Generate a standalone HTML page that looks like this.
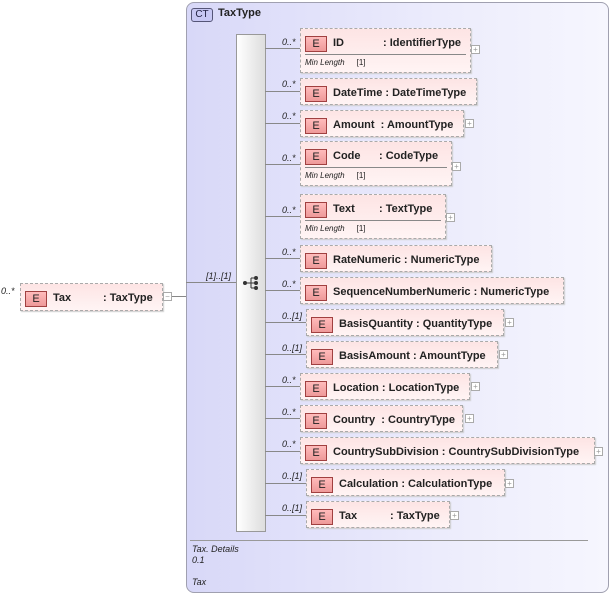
<!DOCTYPE html>
<html><head><meta charset="utf-8"><style>
body{margin:0;width:612px;height:594px;background:#fff;position:relative;overflow:hidden;font-family:"Liberation Sans",sans-serif;}
.a{position:absolute}
.outer{left:186px;top:2px;width:421px;height:589px;border:1px solid #a0a0b0;border-radius:8px;background:linear-gradient(to right,#d8d8f8,#ececfc 60%,#f6f6fe);}
.seq{left:236px;top:34px;width:28px;height:496px;border:1px solid #999;background:linear-gradient(to right,#fff,#ddd);}
.el{position:absolute;border:1px dashed #aaa;background:linear-gradient(to bottom,#fde4e4,#fff4f4);box-shadow:1px 1px 1px #ccc;font-size:11px;font-weight:bold;color:#222;}
.el .row{height:25px;display:flex;align-items:center;white-space:nowrap;padding-top:2px;box-sizing:border-box}
.E{display:inline-block;width:20px;height:14px;border:1px solid #a04040;background:linear-gradient(#fbb,#e99);font-size:11px;font-weight:normal;text-align:center;line-height:14px;margin:0 6px 0 4px;color:#222;position:relative;top:1px}
.fac{border-top:1px solid #888;margin:0 4px;height:17px;font-size:8px;font-style:italic;font-weight:normal;line-height:15px;color:#222}
.fac span{font-style:normal;margin-left:12px}
.ln{position:absolute;height:1px;background:#888}
.lb{position:absolute;font-size:9px;font-style:italic;color:#222}
.pl{position:absolute;width:7px;height:7px;border:1px solid #aaa;background:#fff;font-size:8px;line-height:7px;text-align:center;color:#999}
</style></head><body>
<div class="a outer"></div>
<div class="a" style="left:191px;top:8px;width:20px;height:12px;border:1px solid #557;border-radius:3px;background:#c8c8f4;font-size:10px;line-height:12px;text-align:center;color:#224">CT</div>
<div class="a" style="left:218px;top:7px;font-size:11px;font-weight:bold;color:#222">TaxType</div>
<div class="a seq"></div>
<svg class="a" style="left:242px;top:275px" width="20" height="16"><circle cx="3" cy="8" r="2" fill="#333"/><line x1="3" y1="8" x2="9" y2="8" stroke="#333"/><path d="M9 3V13M9 3H14M9 8H14M9 13H14" stroke="#333" fill="none"/><circle cx="14" cy="3" r="2" fill="#333"/><circle cx="14" cy="8" r="2" fill="#333"/><circle cx="14" cy="13" r="2" fill="#333"/></svg>
<div class="ln" style="left:186px;top:282px;width:50px"></div>
<div class="ln" style="left:171px;top:296px;width:15px"></div>
<div class="lb" style="left:206px;top:271px">[1]..[1]</div>
<div class="lb" style="left:1px;top:286px">0..*</div>
<div class="el" style="left:20px;top:283px;width:141px;height:26px"><div class="row"><span class="E">E</span><span style="width:50px">Tax</span>: TaxType</div></div>
<div class="pl" style="left:163px;top:292px">−</div>
<div class="a" style="left:190px;top:540px;width:398px;height:1px;background:#999"></div>
<div class="lb" style="left:192px;top:544px;line-height:11px">Tax. Details<br>0.1<br><br>Tax</div>

<div class="ln" style="left:265px;top:48px;width:35px"></div><div class="lb" style="left:282px;top:37px">0..*</div>
<div class="el" style="left:300px;top:28px;width:169px;height:43px"><div class="row"><span class="E">E</span><span style="width:50px">ID</span>: IdentifierType</div><div class="fac">Min Length<span>[1]</span></div></div>
<div class="pl" style="left:471px;top:45px">+</div>

<div class="ln" style="left:265px;top:91px;width:35px"></div><div class="lb" style="left:282px;top:79px">0..*</div>
<div class="el" style="left:300px;top:78px;width:175px;height:25px"><div class="row"><span class="E">E</span>DateTime&nbsp;: DateTimeType</div></div>

<div class="ln" style="left:265px;top:123px;width:35px"></div><div class="lb" style="left:282px;top:111px">0..*</div>
<div class="el" style="left:300px;top:110px;width:162px;height:25px"><div class="row"><span class="E">E</span>Amount&nbsp; : AmountType</div></div>
<div class="pl" style="left:465px;top:119px">+</div>

<div class="ln" style="left:265px;top:164px;width:35px"></div><div class="lb" style="left:282px;top:153px">0..*</div>
<div class="el" style="left:300px;top:141px;width:150px;height:43px"><div class="row"><span class="E">E</span><span style="width:46px">Code</span>: CodeType</div><div class="fac">Min Length<span>[1]</span></div></div>
<div class="pl" style="left:452px;top:162px">+</div>

<div class="ln" style="left:265px;top:216px;width:35px"></div><div class="lb" style="left:282px;top:205px">0..*</div>
<div class="el" style="left:300px;top:194px;width:144px;height:43px"><div class="row"><span class="E">E</span><span style="width:46px">Text</span>: TextType</div><div class="fac">Min Length<span>[1]</span></div></div>
<div class="pl" style="left:446px;top:213px">+</div>

<div class="ln" style="left:265px;top:258px;width:35px"></div><div class="lb" style="left:282px;top:247px">0..*</div>
<div class="el" style="left:300px;top:245px;width:190px;height:25px"><div class="row"><span class="E">E</span>RateNumeric&nbsp;: NumericType</div></div>

<div class="ln" style="left:265px;top:290px;width:35px"></div><div class="lb" style="left:282px;top:279px">0..*</div>
<div class="el" style="left:300px;top:277px;width:262px;height:25px"><div class="row"><span class="E">E</span>SequenceNumberNumeric&nbsp;: NumericType</div></div>

<div class="ln" style="left:265px;top:322px;width:42px"></div><div class="lb" style="left:282px;top:311px">0..[1]</div>
<div class="el" style="left:306px;top:309px;width:196px;height:25px"><div class="row"><span class="E">E</span>BasisQuantity&nbsp;: QuantityType</div></div>
<div class="pl" style="left:505px;top:318px">+</div>

<div class="ln" style="left:265px;top:354px;width:42px"></div><div class="lb" style="left:282px;top:343px">0..[1]</div>
<div class="el" style="left:306px;top:341px;width:190px;height:25px"><div class="row"><span class="E">E</span>BasisAmount&nbsp;: AmountType</div></div>
<div class="pl" style="left:499px;top:350px">+</div>

<div class="ln" style="left:265px;top:386px;width:35px"></div><div class="lb" style="left:282px;top:375px">0..*</div>
<div class="el" style="left:300px;top:373px;width:168px;height:25px"><div class="row"><span class="E">E</span>Location&nbsp;: LocationType</div></div>
<div class="pl" style="left:471px;top:382px">+</div>

<div class="ln" style="left:265px;top:418px;width:35px"></div><div class="lb" style="left:282px;top:407px">0..*</div>
<div class="el" style="left:300px;top:405px;width:161px;height:25px"><div class="row"><span class="E">E</span>Country&nbsp; : CountryType</div></div>
<div class="pl" style="left:465px;top:414px">+</div>

<div class="ln" style="left:265px;top:451px;width:35px"></div><div class="lb" style="left:282px;top:439px">0..*</div>
<div class="el" style="left:300px;top:437px;width:293px;height:25px"><div class="row"><span class="E">E</span>CountrySubDivision&nbsp;: CountrySubDivisionType</div></div>
<div class="pl" style="left:594px;top:447px">+</div>

<div class="ln" style="left:265px;top:483px;width:42px"></div><div class="lb" style="left:282px;top:471px">0..[1]</div>
<div class="el" style="left:306px;top:469px;width:197px;height:25px"><div class="row"><span class="E">E</span>Calculation&nbsp;: CalculationType</div></div>
<div class="pl" style="left:505px;top:479px">+</div>

<div class="ln" style="left:265px;top:515px;width:42px"></div><div class="lb" style="left:282px;top:503px">0..[1]</div>
<div class="el" style="left:306px;top:501px;width:142px;height:25px"><div class="row"><span class="E">E</span><span style="width:51px">Tax</span>: TaxType</div></div>
<div class="pl" style="left:450px;top:511px">+</div>
</body></html>
